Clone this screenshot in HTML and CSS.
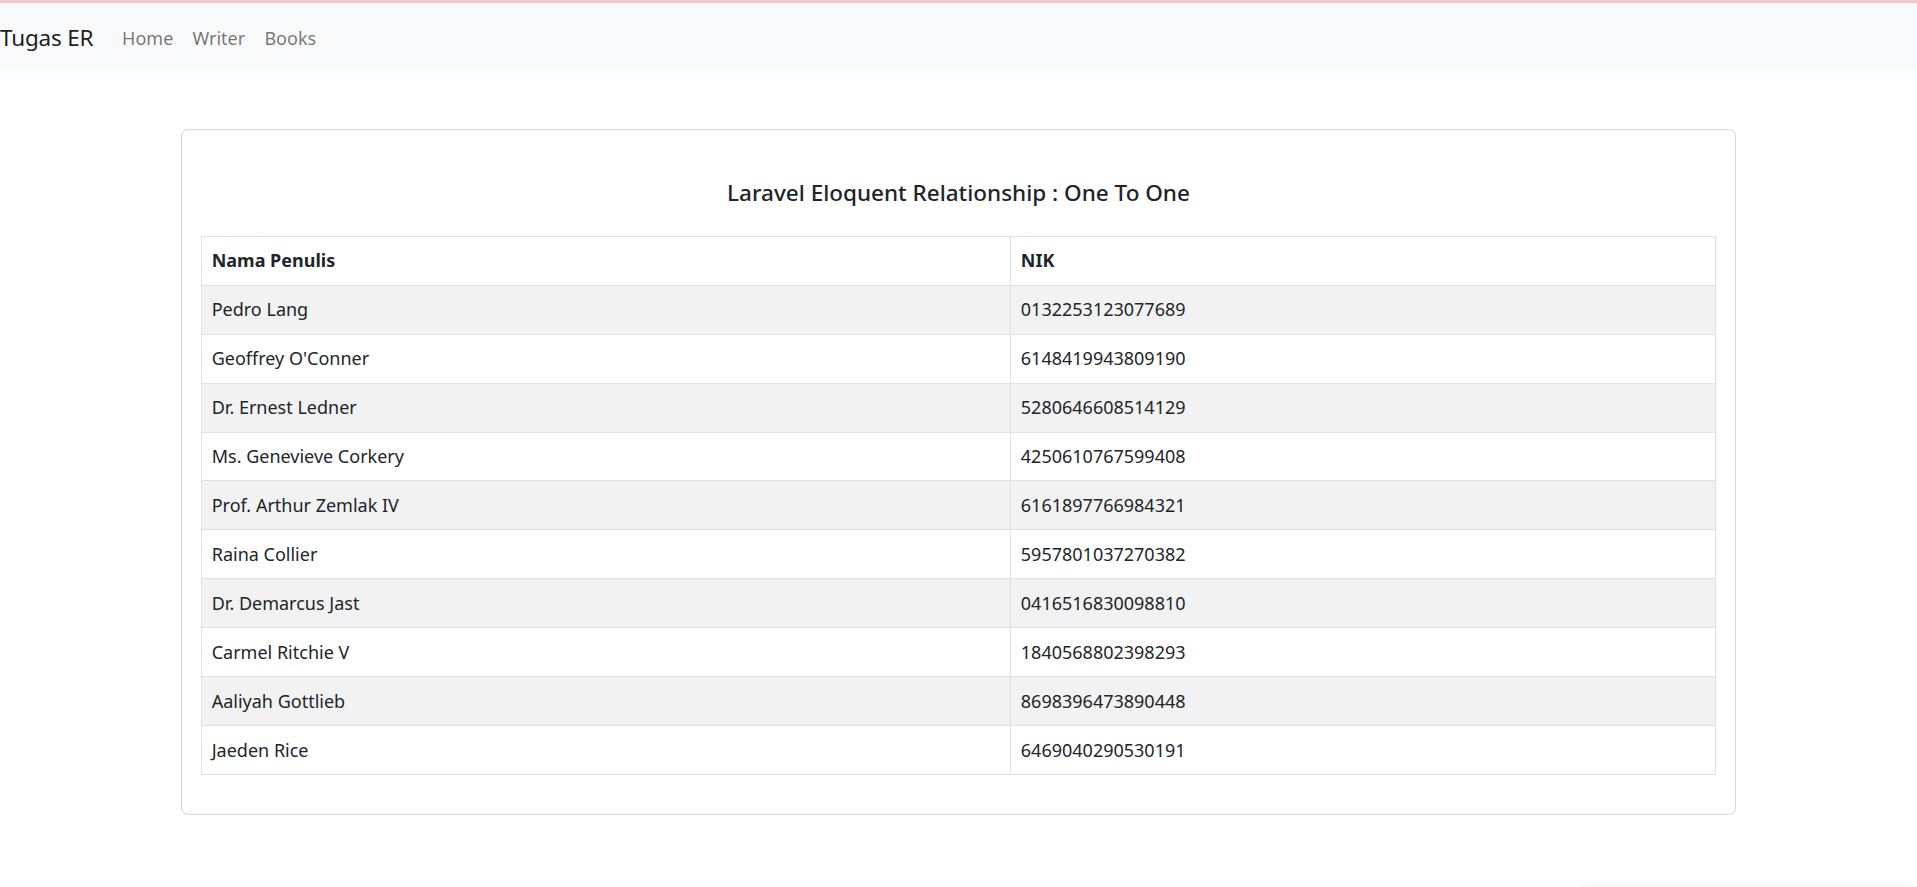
FILE: index.html
```html
<!DOCTYPE html>
<html lang="id">
<head>
<meta charset="utf-8">
<title>Tugas ER</title>
<link rel="stylesheet" href="styles.css">
</head>
<body>
<nav class="navbar">
  <a class="brand" href="#">Tugas ER</a>
  <ul class="nav">
    <li><a class="nav-link" href="#">Home</a></li>
    <li><a class="nav-link" href="#">Writer</a></li>
    <li><a class="nav-link" href="#">Books</a></li>
  </ul>
</nav>
<main class="container">
  <div class="card">
    <div class="card-body">
      <h5 class="title">Laravel Eloquent Relationship : One To One</h5>
      <table class="table">
        <thead>
          <tr><th class="col-name">Nama Penulis</th><th>NIK</th></tr>
        </thead>
        <tbody>
          <tr><td>Pedro Lang</td><td>0132253123077689</td></tr>
          <tr><td>Geoffrey O'Conner</td><td>6148419943809190</td></tr>
          <tr><td>Dr. Ernest Ledner</td><td>5280646608514129</td></tr>
          <tr><td>Ms. Genevieve Corkery</td><td>4250610767599408</td></tr>
          <tr><td>Prof. Arthur Zemlak IV</td><td>6161897766984321</td></tr>
          <tr><td>Raina Collier</td><td>5957801037270382</td></tr>
          <tr><td>Dr. Demarcus Jast</td><td>0416516830098810</td></tr>
          <tr><td>Carmel Ritchie V</td><td>1840568802398293</td></tr>
          <tr><td>Aaliyah Gottlieb</td><td>8698396473890448</td></tr>
          <tr><td>Jaeden Rice</td><td>6469040290530191</td></tr>
        </tbody>
      </table>
    </div>
  </div>
</main>
<div class="toast-shadow"></div>
</body>
</html>
```
FILE: styles.css
```css
* { box-sizing: border-box; }
html, body { height: 100%; }
body {
  margin: 0;
  border-top: 3px solid #f3c5cc;
  font-family: "Noto Sans", "Open Sans", sans-serif;
  font-size: 18px;
  line-height: 28.8px;
  color: #212529;
  background: #fff;
  overflow: hidden;
  position: relative;
}
a { text-decoration: none; }
.navbar {
  display: flex;
  align-items: center;
  background: #f8f9fa;
  padding: 11px 0 9px;
  height: 67.8px;
}
.brand {
  font-size: 22.5px;
  line-height: 36px;
  padding: 0;
  margin-right: 19.2px;
  color: rgba(0,0,0,.9);
  letter-spacing: -0.2px;
}
.nav {
  display: flex;
  list-style: none;
  margin: 0;
  padding: 0;
}
.nav-link {
  display: block;
  padding: 9.6px 9.6px;
  color: rgba(0,0,0,.55);
}
.container {
  width: 1555.2px;
  margin: 58.6px auto 0;
}
.card {
  border: 1px solid #d4d4d4;
  border-radius: 7.2px;
  background: #fff;
}
.card-body {
  padding: 19.2px;
}
.title {
  margin: 29.4px 0 27.8px;
  text-align: center;
  font-size: 22.5px;
  line-height: 28.8px;
  font-weight: 500;
  color: #212529;
}
.table {
  width: 100%;
  border-collapse: collapse;
  border: 1px solid #dee2e6;
  margin-bottom: 19.2px;
}
.table th, .table td {
  text-align: left;
  padding: 9.6px;
  border: 1px solid #dee2e6;
  vertical-align: top;
}
.table th { font-weight: 700; }
.col-name { width: 53.45%; }
.table tbody tr:nth-child(odd) td { background: #f2f2f2; }
.toast-shadow {
  position: absolute;
  right: 4px;
  bottom: -8px;
  width: 330px;
  height: 8px;
  box-shadow: 0 -2px 6px rgba(0,0,0,.05);
  background: #fdfdfd;
}
```
